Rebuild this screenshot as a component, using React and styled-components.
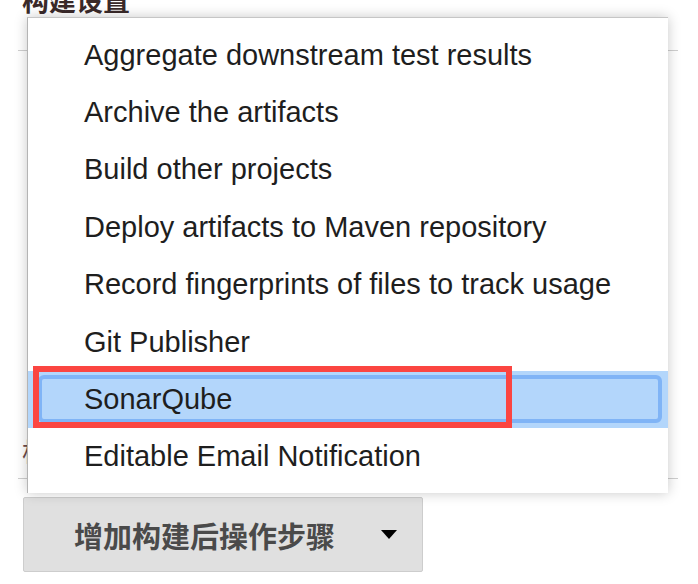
import React from 'react';
import styled, { createGlobalStyle } from 'styled-components';

const GlobalStyle = createGlobalStyle`
  html, body {
    margin: 0;
    padding: 0;
    background: #ffffff;
  }
  * {
    box-sizing: border-box;
  }
`;

const Page = styled.div`
  position: relative;
  width: 698px;
  height: 584px;
  overflow: hidden;
  display: flex;
  flex-direction: column;
  padding-left: 18px;
  font-family: "Liberation Sans", Arial, "Noto Sans CJK SC", sans-serif;
`;

const Heading = styled.h2`
  margin: -17px 0 0 4px;
  height: 34px;
  line-height: 34px;
  font-size: 27px;
  font-weight: bold;
  color: #3a2a2a;
  font-family: "Noto Sans CJK SC", sans-serif;
`;

const Divider = styled.div`
  height: 1px;
  width: 660px;
  background: #cfcfcf;
  margin-top: ${p => p.$top}px;
`;

const SectionBody = styled.div`
  height: 427px;
  display: flex;
  align-items: flex-end;
  padding: 0 0 12px 4px;
`;

const FieldLabel = styled.span`
  font-size: 26px;
  line-height: 30px;
  color: #6b4a4a;
  font-family: "Noto Sans CJK SC", sans-serif;
`;

const AddButton = styled.button`
  margin: 18px 0 0 5px;
  width: 400px;
  height: 75px;
  display: flex;
  align-items: center;
  padding: 0 0 0 50px;
  background: #e0e0e0;
  border: 1px solid #cdcdcd;
  border-radius: 2px;
  font-family: "Noto Sans CJK SC", sans-serif;
  font-size: 29px;
  font-weight: bold;
  color: #4a4a4a;
  cursor: pointer;
`;

const Caret = styled.span`
  margin-left: 46px;
  width: 0;
  height: 0;
  border-left: 8px solid transparent;
  border-right: 8px solid transparent;
  border-top: 9px solid #000;
`;

const Menu = styled.ul`
  position: absolute;
  top: 17px;
  left: 27px;
  width: 641px;
  height: 476px;
  margin: 0;
  padding: 8.5px 0 0;
  list-style: none;
  background: #ffffff;
  border-top: 1px solid #c6c6c6;
  border-left: 1px solid #b4b4b4;
  box-shadow: 0 0 12px rgba(0, 0, 0, 0.22);
`;

const MenuItem = styled.li`
  position: relative;
  height: 57.4px;
  display: flex;
  align-items: center;
  padding-left: 56px;
  font-size: 29px;
  color: #1e1e1e;
  background: ${p => (p.$active ? '#b3d6fb' : 'transparent')};

  &::after {
    content: '';
    display: ${p => (p.$active ? 'block' : 'none')};
    position: absolute;
    top: 4px;
    bottom: 5px;
    left: 10px;
    right: 6px;
    border: 4px solid #80b4f6;
    border-radius: 6px;
  }
`;

const ItemText = styled.span`
  position: relative;
  z-index: 2;
`;

const Callout = styled.span`
  position: absolute;
  top: -5px;
  left: 5px;
  width: 479px;
  height: 62px;
  border: 6px solid #fb4541;
  z-index: 1;
`;

const items = [
  'Aggregate downstream test results',
  'Archive the artifacts',
  'Build other projects',
  'Deploy artifacts to Maven repository',
  'Record fingerprints of files to track usage',
  'Git Publisher',
  'SonarQube',
  'Editable Email Notification',
];

export default function App() {
  return (
    <>
      <GlobalStyle />
      <Page>
        <Heading>构建设置</Heading>
        <Divider $top={33} />
        <SectionBody>
          <FieldLabel>构建环境</FieldLabel>
        </SectionBody>
        <Divider $top={0} />
        <AddButton>
          增加构建后操作步骤
          <Caret />
        </AddButton>

        <Menu>
          {items.map(label => {
            const active = label === 'SonarQube';
            return (
              <MenuItem key={label} $active={active}>
                {active && <Callout />}
                <ItemText>{label}</ItemText>
              </MenuItem>
            );
          })}
        </Menu>
      </Page>
    </>
  );
}
